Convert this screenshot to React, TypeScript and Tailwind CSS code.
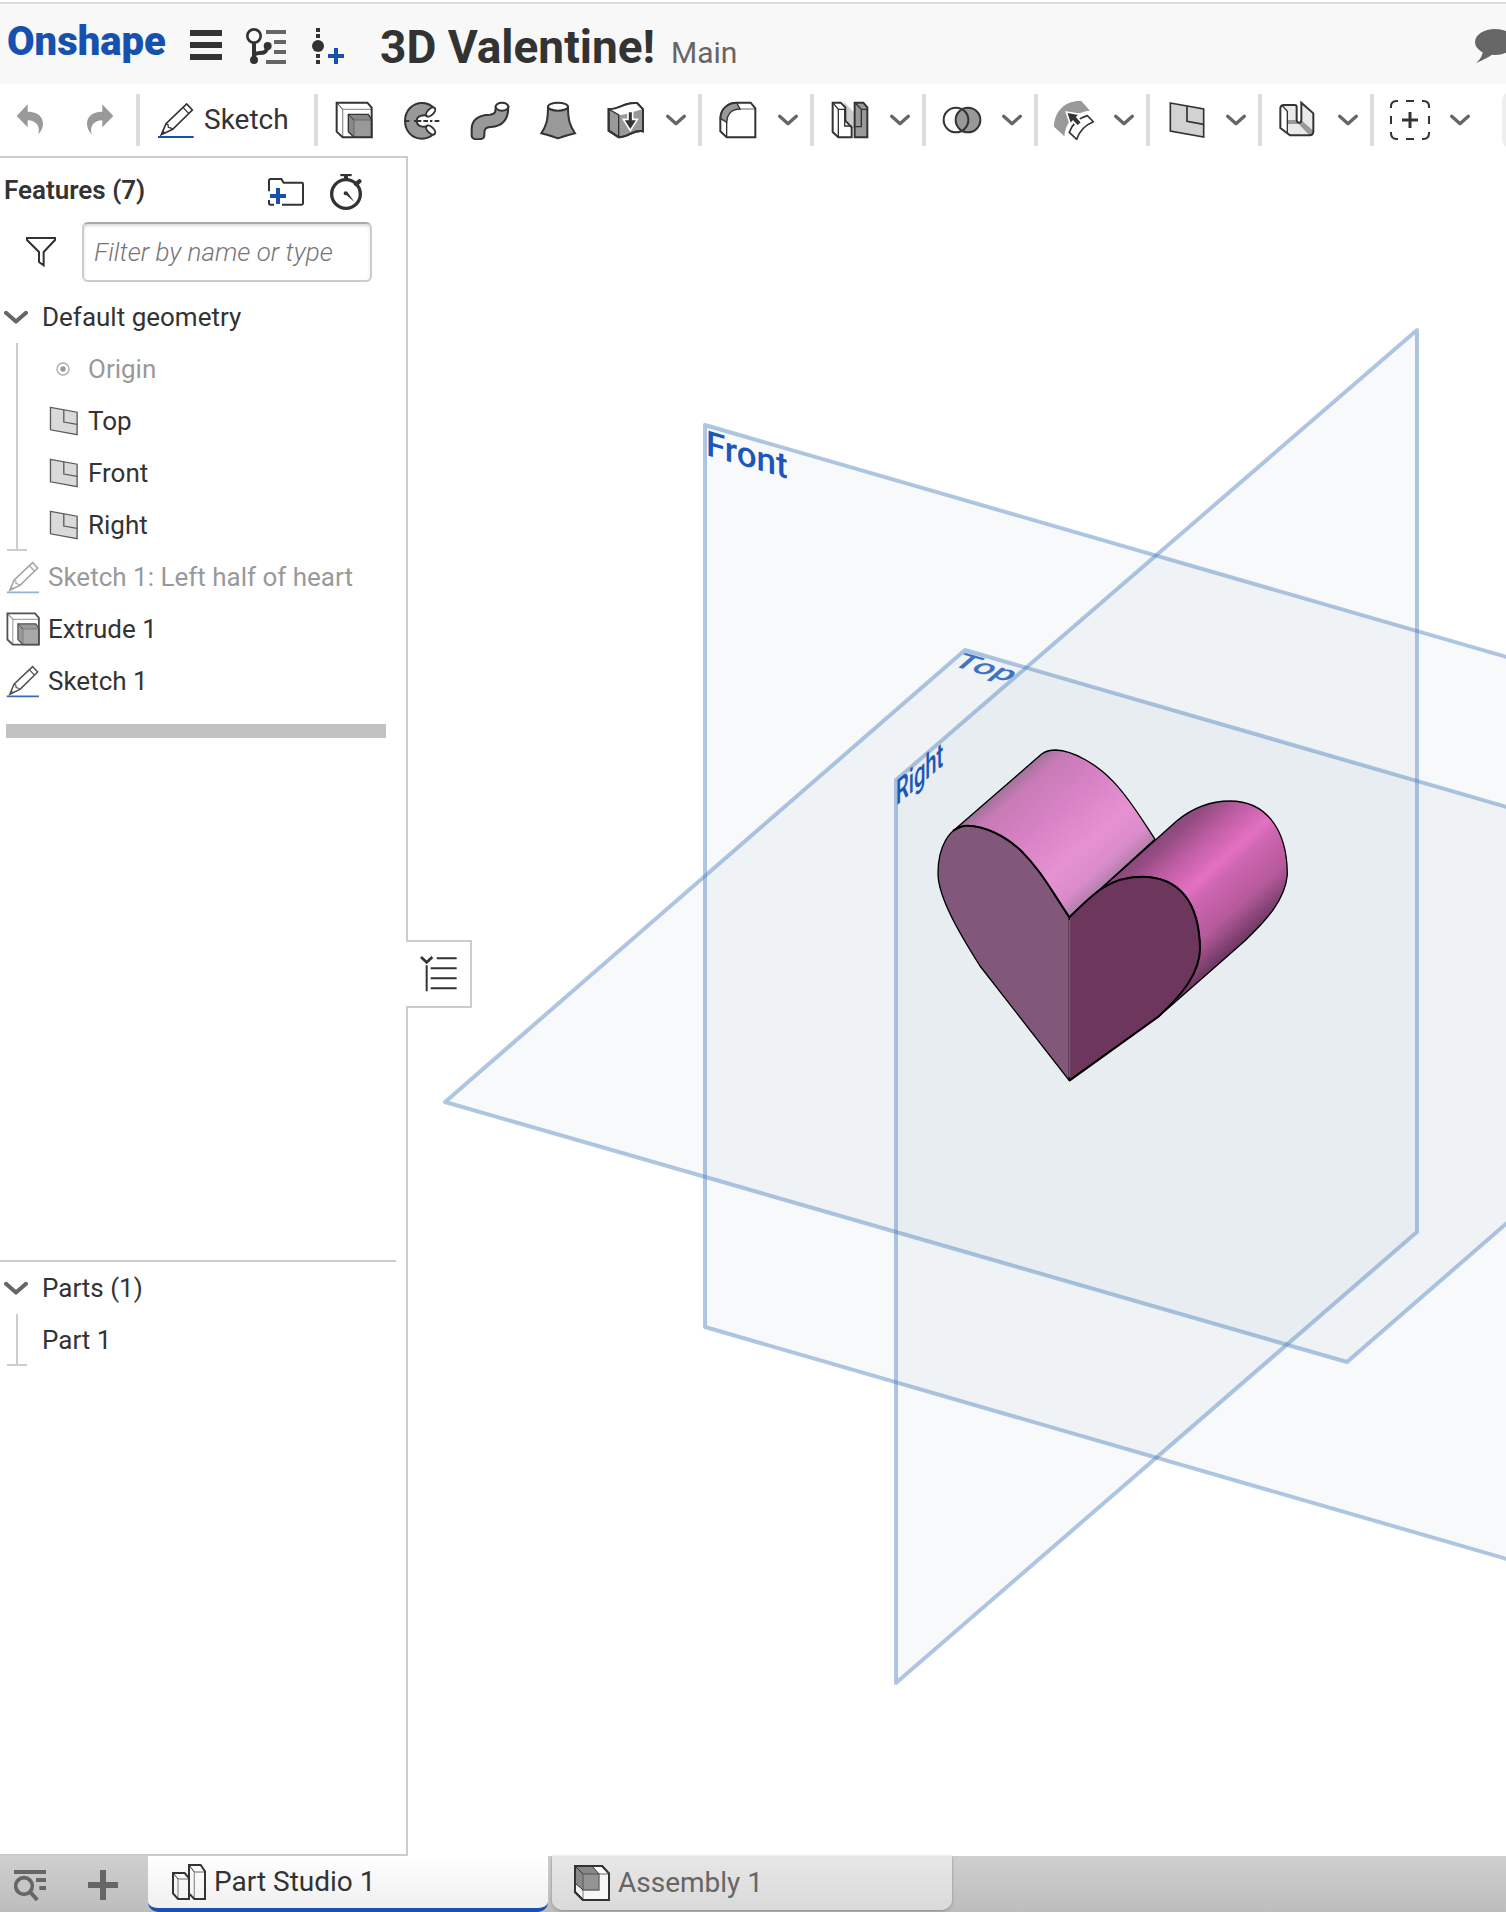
import React from 'react';

type IconProps = { className?: string };

function Svg({ className = 'size-10', children }: { className?: string; children: React.ReactNode }) {
  return (
    <svg viewBox="0 0 120 120" className={className} fill="none" stroke="#333" strokeWidth={6} aria-hidden="true">
      {children}
    </svg>
  );
}

function Chevron({ className = 'w-5' }: IconProps) {
  return (
    <svg viewBox="0 0 60 36" className={className} fill="none" stroke="#666" strokeWidth={10} strokeLinecap="round" strokeLinejoin="round" aria-hidden="true">
      <path d="M5 7 30 29 55 7" />
    </svg>
  );
}

function UndoIcon({ className = 'size-10' }: IconProps) {
  return (
    <Svg className={className}>
      <path d="M20 48 53 13V35C85 36 98 50 99 70C99 85 93 95 85 103C91 78 80 62 53 61V82Z" fill="#999" stroke="none" />
    </Svg>
  );
}

function PencilIcon({ className = 'size-10' }: IconProps) {
  return (
    <Svg className={className}>
      <path d="M6 111H113" stroke="#1651b0" strokeWidth={6} />
      <path d="M16 104 30 71 92 12 109 30 50 88Z" strokeWidth={5} />
      <path d="M30 71 36 74 37 82 45 84 50 88M81 22 98 40" strokeWidth={4} />
      <path d="M15 106 21 92 29 98Z" fill="#333" stroke="none" />
    </Svg>
  );
}

function ExtrudeIcon({ className = 'size-10' }: IconProps) {
  return (
    <Svg className={className}>
      <path d="M26 113V28H113" stroke="#999" strokeWidth={4} />
      <path d="M8 8 26 28" strokeWidth={3} />
      <path d="M43 43H103L113 58V112H60L43 95Z" fill="#888" strokeWidth={4} />
      <path d="M60 60H113V112H60Z" fill="#999" stroke="#666" strokeWidth={3} />
      <path d="M43 43 60 60" strokeWidth={3} />
      <path d="M8 8H100L113 23V112H26L8 95Z" />
    </Svg>
  );
}

function RevolveIcon() {
  return (
    <Svg>
      <path d="M96 24C85 13 74 9 60 9C30 9 9 33 9 63C9 93 30 116 60 116C74 116 85 112 96 101L77 79C64 82 44 80 44 63C44 46 64 44 77 47Z" fill="#999" />
      <ellipse cx="86" cy="36" rx="17" ry="9" transform="rotate(-45 86 36)" fill="#fff" />
      <ellipse cx="86" cy="90" rx="17" ry="9" transform="rotate(45 86 90)" fill="#fff" />
      <path d="M9 63H22M36 63H58M64 63H78M84 63H91M98 63H112" />
    </Svg>
  );
}

function SweepIcon() {
  return (
    <Svg>
      <path d="M77 20C77 36 76 43 60 44C25 45 5 60 5 88V108C6 121 42 121 43 108V100C43 86 48 82 62 81C98 79 115 60 115 20Z" fill="#999" />
      <ellipse cx="96" cy="20" rx="19" ry="12" fill="#fff" />
    </Svg>
  );
}

function LoftIcon() {
  return (
    <Svg>
      <path d="M30 20C30 60 25 78 10 100Q34 106 60 115Q86 106 111 100C96 78 90 60 90 20Z" fill="#999" />
      <ellipse cx="60" cy="20" rx="30" ry="12" fill="#fff" />
    </Svg>
  );
}

function ReplaceFaceIcon() {
  return (
    <Svg>
      <path d="M8 27C40 30 55 5 93 9L111 28V94C80 88 70 112 38 112L8 92Z" fill="#999" />
      <path d="M8 27C40 30 55 5 93 9L111 28C80 34 68 44 38 45Z" fill="#fff" stroke="none" />
      <path d="M8 27 38 45V112" strokeWidth={4} />
      <path d="M8 27C40 30 55 5 93 9L111 28V94C80 88 70 112 38 112L8 92Z" />
      <path d="M66 34H80V58H94L73 91 52 58H66Z" fill="#333" stroke="#fff" strokeWidth={5} />
    </Svg>
  );
}

function FilletIcon() {
  return (
    <Svg>
      <path d="M26 67C27 42 42 27 66 27H112" stroke="#999" strokeWidth={4} />
      <path d="M7 55C8 26 30 8 56 8L66 27C42 27 27 42 26 67Z" fill="#999" strokeWidth={4} />
      <path d="M26 67V113" strokeWidth={4} />
      <path d="M56 8H98L112 25V112H26L7 94V55C8 26 30 8 56 8Z" />
    </Svg>
  );
}

function SplitIcon() {
  return (
    <Svg>
      <path d="M42 6 73 38V84H65L45 62Z" fill="#ccc" stroke="none" />
      <path d="M8 8H32L46 22V62L65 82V112H25L8 96Z" fill="#fff" />
      <path d="M8 8 25 28V112M25 28H44V78H65" strokeWidth={4} />
      <path d="M74 8H100L112 22V112H74V80Z" fill="#999" />
      <path d="M76 10 94 28V80H76M94 28H112" strokeWidth={4} />
    </Svg>
  );
}

function BooleanIcon() {
  return (
    <Svg>
      <circle cx="78" cy="60" r="37" fill="#999" />
      <circle cx="42" cy="60" r="37" />
    </Svg>
  );
}

function MoveFaceIcon() {
  return (
    <Svg>
      <path d="M0 80C1 30 38 0 82 3L108 32C68 35 36 60 31 109Z" fill="#999" stroke="none" />
      <path d="M46 97 68 118C75 95 92 76 118 65L100 47C75 54 56 70 46 97Z" fill="#fff" strokeWidth={5} />
      <path d="M37 36 77 43 69 51 83 67 71 79 57 64 49 73Z" fill="#333" stroke="#fff" strokeWidth={5} />
    </Svg>
  );
}

function PlaneIcon({ className = 'size-10' }: IconProps) {
  return (
    <Svg className={className}>
      <path d="M13 9 113 27V111L13 93Z" fill="#d2d2d2" strokeWidth={5} />
      <path d="M63 18V64L113 73" strokeWidth={5} />
    </Svg>
  );
}

function SheetMetalIcon() {
  return (
    <Svg>
      <path d="M7 24Q8 15 18 15H56V60Q63 76 70 60V8L106 40V96Q105 106 95 106H36L7 84Z" fill="#eaeaea" stroke="none" />
      <path d="M28 60H56Q62 74 72 62L106 92Q106 106 94 106L62 72H28Z" fill="#999" stroke="none" />
      <path d="M8 18 28 34V100L7 84Z" fill="#fff" stroke="none" />
      <path d="M12 16 28 34V100" strokeWidth={4} />
      <path d="M7 24Q8 15 18 15H50Q56 15 56 21V60Q57 68 63 68Q70 68 70 60V8L106 40V96Q105 106 95 106H36L7 84Z" />
    </Svg>
  );
}

function AddCustomIcon() {
  return (
    <Svg>
      <path d="M3 24V20Q3 3 20 3H24M96 3H100Q117 3 117 20V24M117 96V100Q117 117 100 117H96M24 117H20Q3 117 3 100V96M48 3H72M48 117H72M3 48V72M117 48V72" />
      <path d="M36 60H84M60 36V84" strokeWidth={9} />
    </Svg>
  );
}

function VersionsIcon() {
  return (
    <svg viewBox="0 0 120 108" className="h-9 w-10" fill="none" aria-hidden="true">
      <path d="M60 12H120M84 42H120M84 72H120M60 102H120" stroke="#666" strokeWidth={12} />
      <circle cx="24" cy="24" r="20" stroke="#333" strokeWidth={8} />
      <path d="M24 44V96M24 82C32 66 62 88 64 54" stroke="#333" strokeWidth={12} />
      <circle cx="24" cy="96" r="12" fill="#333" />
      <circle cx="65" cy="54" r="12" fill="#333" />
    </svg>
  );
}

function InsertVersionIcon() {
  return (
    <svg viewBox="0 0 96 108" className="h-9 w-8" fill="none" aria-hidden="true">
      <path d="M18 0V12M18 18V30M18 78V90M18 96V108" stroke="#333" strokeWidth={12} />
      <circle cx="18" cy="54" r="18" fill="#333" />
      <path d="M48 84H96M72 60V108" stroke="#1651b0" strokeWidth={12} />
    </svg>
  );
}

function NewFolderIcon() {
  return (
    <svg viewBox="0 0 108 84" className="h-7 w-9" fill="none" stroke="#333" strokeWidth={6} aria-hidden="true">
      <path d="M3 40V8Q3 3 8 3H40L47 14H101Q105 14 105 18V76Q105 80 101 80H42M3 66V76Q3 80 8 80H18" />
      <path d="M6 54H54M30 30V78" stroke="#1651b0" strokeWidth={12} />
    </svg>
  );
}

function StopwatchIcon() {
  return (
    <svg viewBox="0 0 96 108" className="h-9 w-8" fill="none" stroke="#333" aria-hidden="true">
      <circle cx="48" cy="60" r="43" strokeWidth={10} />
      <path d="M31 3H65" strokeWidth={7} />
      <path d="M48 4V16" strokeWidth={12} />
      <path d="M78 30 88 22" strokeWidth={13} strokeLinecap="round" />
      <path d="M42 57 52 54 73 84Z" fill="#333" stroke="none" />
      <circle cx="47" cy="58" r="6" fill="#333" stroke="none" />
    </svg>
  );
}

function FunnelIcon() {
  return (
    <svg viewBox="0 0 90 90" className="size-[30px]" fill="none" stroke="#333" strokeWidth={6} aria-hidden="true">
      <path d="M3 3H87V9L53 45V85L39 75V45L3 9Z" />
    </svg>
  );
}

function OriginIcon() {
  return (
    <svg viewBox="0 0 42 42" className="size-[14px]" fill="none" aria-hidden="true">
      <circle cx="21" cy="21" r="18" stroke="#aaa" strokeWidth={4} />
      <circle cx="21" cy="21" r="8" fill="#999" />
    </svg>
  );
}

function PartStudioIcon() {
  return (
    <svg viewBox="0 0 102 108" className="h-9 w-[34px]" fill="none" stroke="#333" strokeWidth={6} aria-hidden="true">
      <path d="M18 45H49M18 45V106M67 24H99M67 24V106" stroke="#999" strokeWidth={4} />
      <path d="M3 27 18 45M51 3 67 24" strokeWidth={3} />
      <path d="M3 27H38L51 42V105H18L3 88Z" />
      <path d="M51 3H86L99 22V105H67L51 88Z" />
    </svg>
  );
}

function AssemblyIcon() {
  return (
    <svg viewBox="0 0 108 108" className="size-9" fill="none" stroke="#333" strokeWidth={6} aria-hidden="true">
      <path d="M3 3H84L105 26V105H27L3 81Z" fill="#f6f6f6" />
      <path d="M54 3H84L105 26H75Z" fill="#fff" stroke="none" />
      <path d="M3 3H54L75 27V75H27L3 54Z" fill="#888" stroke="none" />
      <path d="M27 105V75M75 27H105" stroke="#999" strokeWidth={4} />
      <path d="M27 27H75V75H27Z" fill="#949494" stroke="#666" strokeWidth={4} />
      <path d="M3 3 27 27M54 3 75 27M3 54 27 75" strokeWidth={3} />
      <path d="M3 3H84L105 26V105H27L3 81Z" />
    </svg>
  );
}

function TabSearchIcon() {
  return (
    <svg viewBox="0 0 96 96" className="size-8" fill="none" stroke="#666" aria-hidden="true">
      <path d="M0 6H96" strokeWidth={12} />
      <circle cx="30" cy="48" r="25" strokeWidth={11} />
      <path d="M50 68 70 90" strokeWidth={12} />
      <path d="M66 30H96M76 54H96" strokeWidth={12} />
    </svg>
  );
}

function Separator() {
  return <span className="h-[52px] w-1 shrink-0 bg-[#ddd]" />;
}

function ToolButton({ label, children }: { label: string; children: React.ReactNode }) {
  return (
    <button type="button" aria-label={label} className="flex h-[52px] w-[68px] shrink-0 items-center justify-center">
      {children}
    </button>
  );
}

function MoreButton({ label }: { label: string }) {
  return (
    <button type="button" aria-label={label} className="mr-1.5 flex h-[52px] w-8 shrink-0 items-center justify-center">
      <Chevron />
    </button>
  );
}

const solidTools = [
  { label: 'Extrude', icon: <ExtrudeIcon /> },
  { label: 'Revolve', icon: <RevolveIcon /> },
  { label: 'Sweep', icon: <SweepIcon /> },
  { label: 'Loft', icon: <LoftIcon /> },
  { label: 'Replace face', icon: <ReplaceFaceIcon /> },
];

const menuTools = [
  { label: 'Fillet', icon: <FilletIcon /> },
  { label: 'Split', icon: <SplitIcon /> },
  { label: 'Boolean', icon: <BooleanIcon /> },
  { label: 'Move face', icon: <MoveFaceIcon /> },
  { label: 'Plane', icon: <PlaneIcon /> },
  { label: 'Sheet metal', icon: <SheetMetalIcon /> },
  { label: 'Add custom features', icon: <AddCustomIcon /> },
];

function Header() {
  return (
    <header className="mt-0.5 flex h-[82px] shrink-0 items-start overflow-hidden border-t-2 border-[#dcdce2] bg-[#f8f8f8]">
      <a href="#" className="w-[182px] shrink-0 pt-2.5 pl-[7px] text-[40px] leading-[56px] font-black text-[#1651b0]">
        Onshape
      </a>
      <button type="button" aria-label="Menu" className="mt-[26px] ml-2 flex w-8 shrink-0 flex-col gap-1.5">
        <span className="h-1.5 w-full bg-[#333]" />
        <span className="h-1.5 w-full bg-[#333]" />
        <span className="h-1.5 w-full bg-[#333]" />
      </button>
      <button type="button" aria-label="Versions and history" className="mt-6 ml-6 shrink-0">
        <VersionsIcon />
      </button>
      <button type="button" aria-label="Create version" className="mt-6 ml-[26px] shrink-0">
        <InsertVersionIcon />
      </button>
      <div className="ml-9 flex shrink-0 items-baseline gap-4 pt-[15px] leading-[56px]">
        <h1 className="text-[46px] leading-[56px] font-bold text-[#333]">3D Valentine!</h1>
        <span className="text-[30px] text-[#666]">Main</span>
      </div>
      <button type="button" aria-label="Comments" className="mt-6 -mr-2 ml-auto shrink-0">
        <svg viewBox="0 0 40 36" className="h-9 w-10" fill="#666" aria-hidden="true">
          <ellipse cx="21" cy="14" rx="20" ry="13" />
          <path d="M9 22Q9 29 2 35Q14 30 19 26Z" />
        </svg>
      </button>
    </header>
  );
}

function Toolbar() {
  return (
    <nav aria-label="Feature tools" className="flex h-[72px] shrink-0 items-center overflow-hidden bg-white">
      <button type="button" aria-label="Undo" className="flex w-[60px] shrink-0 justify-center">
        <UndoIcon />
      </button>
      <button type="button" aria-label="Redo" className="flex w-[76px] shrink-0 justify-center pl-1">
        <UndoIcon className="size-10 -scale-x-100" />
      </button>
      <Separator />
      <button type="button" className="flex w-[174px] shrink-0 items-center gap-2 pl-4 text-[28px] text-[#333]">
        <PencilIcon />
        Sketch
      </button>
      <Separator />
      <div className="flex pl-0.5">
        {solidTools.map((t) => (
          <ToolButton key={t.label} label={t.label}>{t.icon}</ToolButton>
        ))}
        <MoreButton label="More solid tools" />
      </div>
      {menuTools.map((t) => (
        <React.Fragment key={t.label}>
          <Separator />
          <div className="flex pl-0.5">
            <ToolButton label={t.label}>{t.icon}</ToolButton>
            <MoreButton label={`${t.label} options`} />
          </div>
        </React.Fragment>
      ))}
      <span className="ml-5 h-[60px] min-w-4 flex-1 rounded-l-xl bg-[#eee]" />
    </nav>
  );
}

function TreeToggle({ children }: { children: React.ReactNode }) {
  return (
    <button type="button" className="flex h-[52px] w-full items-center gap-3.5 pl-1 text-left">
      <Chevron className="w-6" />
      {children}
    </button>
  );
}

function TreeGuide() {
  return (
    <span className="flex w-5 shrink-0 flex-col items-center">
      <span className="w-0.5 flex-1 bg-[#ccc]" />
      <span className="h-0.5 w-full bg-[#ccc]" />
    </span>
  );
}

const planes = ['Top', 'Front', 'Right'];

function FeaturePanel() {
  return (
    <aside className="flex w-[408px] shrink-0 flex-col border-t-2 border-r-2 border-b-2 border-[#ccc] bg-white text-[26px] leading-[32px] text-[#333]">
      <section className="flex flex-[65] flex-col">
        <div className="flex h-16 items-center pr-11 pl-1">
          <h2 className="flex-1 font-semibold">Features (7)</h2>
          <button type="button" aria-label="Add folder" className="mt-1 mr-[26px]">
            <NewFolderIcon />
          </button>
          <button type="button" aria-label="Regeneration times" className="mt-1">
            <StopwatchIcon />
          </button>
        </div>
        <div className="flex items-center gap-[26px] pl-[26px]">
          <button type="button" aria-label="Filter" className="shrink-0">
            <FunnelIcon />
          </button>
          <input
            type="text"
            aria-label="Filter by name or type"
            placeholder="Filter by name or type"
            className="h-[60px] w-[290px] rounded-md border-2 border-[#ccc] border-t-[#aaa] px-2.5 font-light italic shadow-[inset_0_2px_3px_#ddd] placeholder:text-[#777]"
          />
        </div>
        <div className="mt-[9px]">
          <TreeToggle>Default geometry</TreeToggle>
          <div className="flex pl-[7px]">
            <TreeGuide />
            <ul className="flex-1 pl-5">
              <li className="flex h-[52px] items-center gap-[9px] text-[#999]">
                <span className="flex w-8 justify-center">
                  <OriginIcon />
                </span>
                Origin
              </li>
              {planes.map((name) => (
                <li key={name} className="flex h-[52px] items-center gap-[9px]">
                  <PlaneIcon className="size-8 opacity-80" />
                  {name}
                </li>
              ))}
            </ul>
          </div>
          <ul className="pl-[5px]">
            <li className="flex h-[52px] items-center gap-[7px] text-[#999]">
              <PencilIcon className="size-9 opacity-45" />
              Sketch 1: Left half of heart
            </li>
            <li className="flex h-[52px] items-center gap-[7px]">
              <ExtrudeIcon className="size-9 opacity-85" />
              Extrude 1
            </li>
            <li className="flex h-[52px] items-center gap-[7px]">
              <PencilIcon className="size-9 opacity-85" />
              Sketch 1
            </li>
          </ul>
        </div>
        <div className="mt-[17px] mr-5 ml-1.5 h-3.5 bg-[#c2c2c2]" />
      </section>
      <section className="flex-[35]">
        <div className="mr-2.5 h-0.5 bg-[#ccc]" />
        <TreeToggle>Parts (1)</TreeToggle>
        <div className="flex h-[52px] pl-[7px]">
          <TreeGuide />
          <span className="flex items-center pl-[15px]">Part 1</span>
        </div>
      </section>
    </aside>
  );
}

function Viewport() {
  return (
    <svg
      viewBox="408 156 1098 1700"
      preserveAspectRatio="xMinYMid slice"
      className="absolute inset-0 size-full"
      role="img"
      aria-label="Extruded heart with Front, Top and Right planes"
    >
      <defs>
        <linearGradient id="lobeLeft" gradientUnits="userSpaceOnUse" x1="170" y1="325" x2="449" y2="642">
          <stop offset="0" stopColor="#a0729a" />
          <stop offset="0.1" stopColor="#c77bb5" />
          <stop offset="0.35" stopColor="#d681c3" />
          <stop offset="0.7" stopColor="#e691d2" />
          <stop offset="0.89" stopColor="#d98bc9" />
          <stop offset="1" stopColor="#b07eaa" />
        </linearGradient>
        <linearGradient id="lobeRight" gradientUnits="userSpaceOnUse" x1="765" y1="358" x2="1034" y2="663">
          <stop offset="0" stopColor="#8b477a" />
          <stop offset="0.08" stopColor="#954d83" />
          <stop offset="0.22" stopColor="#bb5ba0" />
          <stop offset="0.44" stopColor="#e371c3" />
          <stop offset="0.55" stopColor="#cd65b0" />
          <stop offset="0.78" stopColor="#b55a9b" />
          <stop offset="1" stopColor="#6b3860" />
        </linearGradient>
      </defs>
      <g fill="#4d7390" fillOpacity={0.045} stroke="#4f82c0" strokeOpacity={0.45} strokeWidth={4} strokeLinejoin="round">
        <path d="M705 425V1327L1607 1588V686Z" />
        <path d="M965 650 445 1102 1347 1362 1866 911Z" />
        <path d="M896 780 1417 330V1232L896 1683Z" />
      </g>
      <g fontSize={35} fill="#1b56b8" className="font-[Roboto] font-medium">
        <text transform="matrix(1 0.288 0 1 706 455)">Front</text>
        <text transform="matrix(1 0.288 -0.577 0.5 950 665)" fill="#4072c2">Top</text>
        <text transform="matrix(0.578 -0.5 0 1 896 806)">Right</text>
      </g>
      <g transform="translate(900 720) scale(0.33333)" stroke="#000" strokeWidth={4} strokeLinejoin="round">
        <path
          d="M160 332 425 102C440 91 452 90 467 90C520 92 590 132 640 185C690 237 730 305 765 358L508 592Z"
          fill="url(#lobeLeft)"
        />
        <path
          d="M508 592 830 303C880 262 935 243 990 243C1090 243 1162 318 1162 465C1155 540 1100 600 1035 662L775 890Z"
          fill="url(#lobeRight)"
        />
        <path d="M508 592C450 505 425 455 365 394C315 346 250 317 203 317C145 318 114 385 114 460C114 530 175 635 240 738L508 1082Z" fill="#815879" />
        <path d="M508 592C580 520 630 470 725 470C840 470 898 550 900 685C900 760 845 825 775 890L508 1082Z" fill="#6c365d" />
        <path d="M508 600V1072" stroke="#815879" strokeWidth={5} />
        <path d="M508 592C450 505 425 455 365 394C315 346 250 317 203 317C186 317 172 323 160 332" fill="none" strokeWidth={6} />
        <path d="M508 592C580 520 630 470 725 470C840 470 898 550 900 685C900 760 845 825 775 890L508 1082" fill="none" strokeWidth={6} />
      </g>
    </svg>
  );
}

function TabBar() {
  return (
    <footer className="flex h-14 shrink-0 items-start bg-linear-to-b from-[#cfcfcf] to-[#bdbdbd] text-[28px]">
      <button type="button" aria-label="Search tabs" className="mt-3.5 ml-3.5 shrink-0">
        <TabSearchIcon />
      </button>
      <button type="button" aria-label="Insert new element" className="mt-3.5 mr-[30px] ml-[42px] shrink-0">
        <svg viewBox="0 0 30 30" className="size-[30px]" stroke="#666" strokeWidth={6} aria-hidden="true">
          <path d="M0 15H30M15 0V30" />
        </svg>
      </button>
      <button type="button" className="flex h-14 w-[400px] items-center gap-2 rounded-b-[10px] border-b-4 border-[#1651b0] bg-linear-to-b from-white to-[#f0f0f0] pl-6 text-[#333]">
        <PartStudioIcon />
        Part Studio 1
      </button>
      <button type="button" className="ml-1 flex h-[54px] w-[400px] items-center gap-2 rounded-b-[10px] bg-linear-to-b from-[#e7e7e7] to-[#dadada] pl-[22px] text-[#666] shadow-[0_1px_3px_#888]">
        <AssemblyIcon />
        Assembly 1
      </button>
    </footer>
  );
}

export default function App() {
  return (
    <div className="flex min-h-screen flex-col overflow-hidden bg-white font-[Roboto,sans-serif]">
      <Header />
      <Toolbar />
      <main className="relative flex flex-1">
        <FeaturePanel />
        <div className="relative flex-1 overflow-hidden">
          <Viewport />
        </div>
        <div className="absolute inset-y-0 left-[406px] flex items-center pb-16">
          <button
            type="button"
            aria-label="Toggle feature list"
            className="flex h-[68px] w-[66px] items-center border-2 border-l-0 border-[#ccc] bg-white pl-3.5"
          >
            <svg viewBox="0 0 110 108" className="h-9" fill="none" stroke="#333" strokeWidth={6} aria-hidden="true">
              <path d="M3 3 20 19 37 3" strokeWidth={8} />
              <path d="M20 28V106M50 7H110M32 37H110M32 67H110M32 97H110" />
            </svg>
          </button>
        </div>
      </main>
      <TabBar />
    </div>
  );
}
